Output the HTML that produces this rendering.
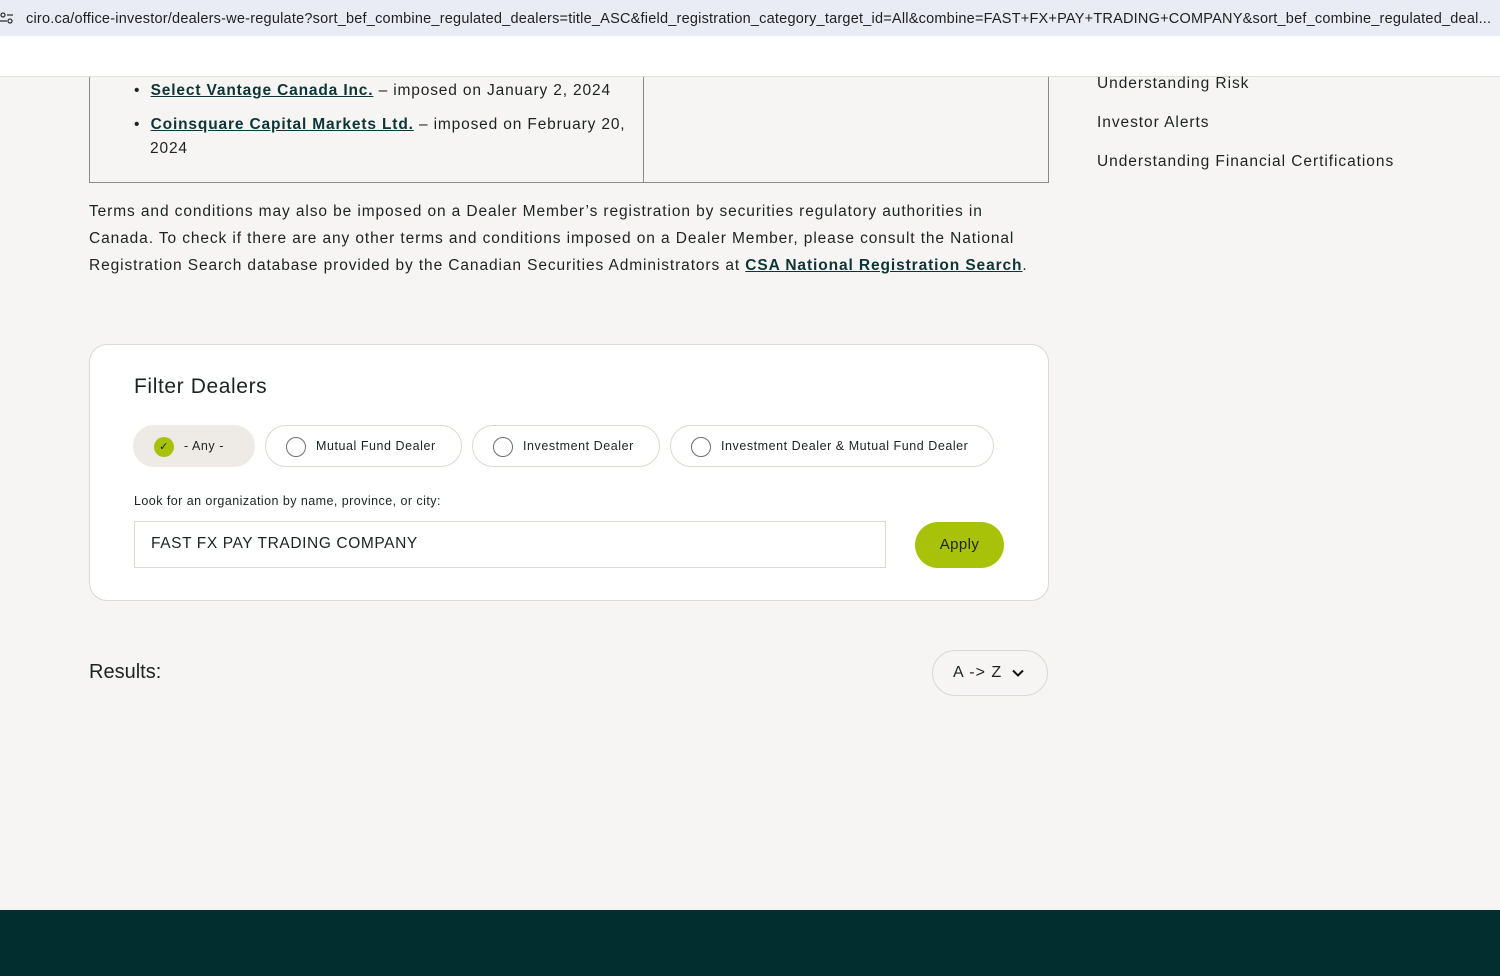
<!DOCTYPE html>
<html><head><style>
*{box-sizing:border-box;margin:0;padding:0}
body{width:1500px;height:976px;overflow:hidden;background:#f6f5f3;font-family:"Liberation Sans",sans-serif;color:#1d2322;position:relative}
.url{position:absolute;left:0;top:0;width:1500px;height:36px;background:#e9ecf5;}
.url span{position:absolute;left:26px;top:11px;font-size:14.5px;color:#1f1f1f;letter-spacing:0.22px;white-space:nowrap}
.topbar{position:absolute;left:0;top:36px;width:1500px;height:41px;background:#fff;border-bottom:1px solid #e2e0dc}
.tbl{position:absolute;left:89px;top:77px;width:960px;height:106px;border:1px solid #8a8a86;border-top:none}
.tbl .div{position:absolute;left:553px;top:0;width:1px;height:105px;background:#8a8a86}
.li{position:absolute;font-size:15.5px;color:#1d2322;letter-spacing:0.85px;white-space:nowrap}
a{color:#0d3436;font-weight:bold;text-decoration:underline}
.p{position:absolute;left:89px;top:198px;width:990px;font-size:15.5px;line-height:27px;letter-spacing:0.9px;white-space:nowrap}
.side{position:absolute;left:1097px;font-size:15.5px;letter-spacing:0.95px}
.card{position:absolute;left:89px;top:344px;width:960px;height:257px;background:#fff;border:1px solid #dcd8d2;border-radius:18px}
.pill{position:absolute;top:425px;height:42px;border:1px solid #dcd8d2;border-radius:21px;font-size:12.5px;letter-spacing:0.55px;background:#fff;white-space:nowrap}
.pill i{position:absolute;left:20px;top:11px;width:20px;height:20px;border:1.5px solid #6e6d78;border-radius:50%}
.pill span{position:absolute;top:13px}
.in{position:absolute;left:134px;top:521px;width:752px;height:47px;border:1px solid #dcd8d2;font-size:15.5px;padding:13px 16px;letter-spacing:0.6px}
.btn{position:absolute;left:915px;top:522px;width:89px;height:46px;border-radius:23px;background:#a8c20a;font-size:15px;text-align:center;line-height:46px;letter-spacing:0.4px}
.sort{position:absolute;left:932px;top:650px;width:116px;height:46px;border:1px solid #dcd8d2;border-radius:23px;font-size:16px;padding:13px 20px;letter-spacing:1px}
.foot{position:absolute;left:0;top:910px;width:1500px;height:66px;background:#022e2f}
</style></head><body>
<div class="url"><svg style="position:absolute;left:0;top:11px" width="14" height="14" viewBox="0 0 14 14"><circle cx="3" cy="4" r="2" fill="none" stroke="#333" stroke-width="1.3"/><line x1="7" y1="4" x2="13" y2="4" stroke="#333" stroke-width="1.3"/><circle cx="10" cy="10" r="2" fill="none" stroke="#333" stroke-width="1.3"/><line x1="0" y1="10" x2="7" y2="10" stroke="#333" stroke-width="1.3"/></svg><span>ciro.ca/office-investor/dealers-we-regulate?sort_bef_combine_regulated_dealers=title_ASC&amp;field_registration_category_target_id=All&amp;combine=FAST+FX+PAY+TRADING+COMPANY&amp;sort_bef_combine_regulated_deal...</span></div>
<div class="topbar"></div>
<div class="tbl"><div class="div"></div></div>
<div class="li" style="left:134px;top:82px">•&nbsp;&nbsp;<a>Select Vantage Canada Inc.</a> – imposed on January 2, 2024</div>
<div class="li" style="left:134px;top:116px">•&nbsp;&nbsp;<a>Coinsquare Capital Markets Ltd.</a> – imposed on February 20,</div>
<div class="li" style="left:150px;top:140px">2024</div>
<div class="side" style="top:75px">Understanding Risk</div>
<div class="side" style="top:114px">Investor Alerts</div>
<div class="side" style="top:153px">Understanding Financial Certifications</div>
<div class="p">Terms and conditions may also be imposed on a Dealer Member’s registration by securities regulatory authorities in<br>Canada. To check if there are any other terms and conditions imposed on a Dealer Member, please consult the National<br>Registration Search database provided by the Canadian Securities Administrators at <a>CSA National Registration Search</a>.</div>
<div class="card"></div>
<div style="position:absolute;left:134px;top:375px;font-size:21px;letter-spacing:0.6px">Filter Dealers</div>
<div class="pill" style="left:133px;width:122px;background:#eeebe6;border-color:#eeebe6"><b style="position:absolute;left:20px;top:11px;width:20px;height:20px;border-radius:50%;background:#a8c20a;font-size:11px;text-align:center;line-height:20px;font-weight:normal">✓</b><span style="left:50px">- Any -</span></div>
<div class="pill" style="left:265px;width:197px"><i></i><span style="left:50px">Mutual Fund Dealer</span></div>
<div class="pill" style="left:472px;width:188px"><i></i><span style="left:50px">Investment Dealer</span></div>
<div class="pill" style="left:670px;width:324px"><i></i><span style="left:50px">Investment Dealer &amp; Mutual Fund Dealer</span></div>
<div style="position:absolute;left:134px;top:494px;font-size:12.5px;letter-spacing:0.45px">Look for an organization by name, province, or city:</div>
<div class="in">FAST FX PAY TRADING COMPANY</div>
<div class="btn">Apply</div>
<div style="position:absolute;left:89px;top:661px;font-size:20px">Results:</div>
<div class="sort">A -&gt; Z <svg width="12" height="8" viewBox="0 0 12 8" style="margin-left:4px"><path d="M1 1.5L6 6.5L11 1.5" fill="none" stroke="#111" stroke-width="2"/></svg></div>
<div class="foot"></div>
</body></html>
